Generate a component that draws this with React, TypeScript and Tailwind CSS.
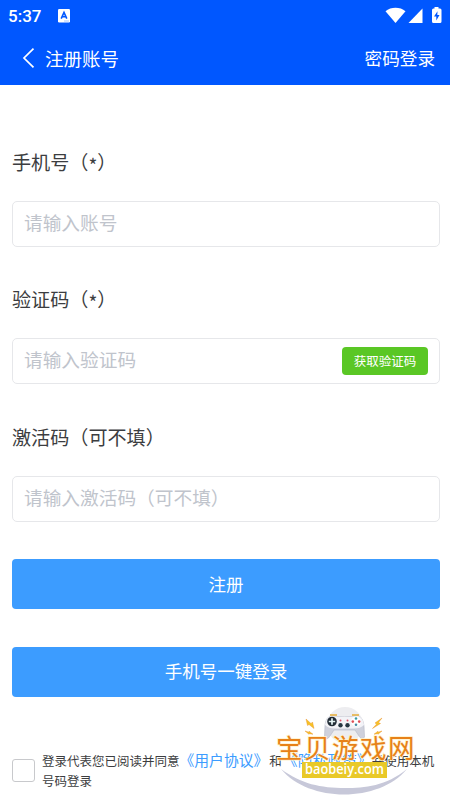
import { useState } from 'react'

interface FieldProps {
  label: string
  required?: boolean
  placeholder: string
  action?: string
}

function StatusBar() {
  return (
    <div className="flex h-8 items-center justify-between pl-2 pr-[7px]">
      <div className="flex items-center">
        <span className="w-[50px] font-[Roboto] text-[17px] font-medium leading-8">5:37</span>
        <svg width="12" height="14" viewBox="0 0 12 14">
          <rect width="12" height="13.5" rx="1.2" fill="#fff" />
          <path d="M3.2 9.7 6 3.5l2.8 6.2M4.3 7.8h3.4" fill="none" stroke="#0057ff" strokeWidth="1.6" />
          <path d="M6 12h5" stroke="#8cb4ff" strokeWidth="0.8" />
        </svg>
      </div>
      <svg className="-mt-0.5" width="58" height="18" viewBox="0 0 58 18" fill="#fff">
        <path d="M0.5 5.3C6 0.7 15 0.7 20.5 5.3L10.5 17z" />
        <path d="M37.5 2.5V17H23.5z" />
        <path d="M49.5 1h4v1.5h1.5q1.5 0 1.5 1.5v11.5q0 1.5-1.5 1.5h-6.5q-1.5 0-1.5-1.5V4q0-1.5 1.5-1.5h1z" />
        <path d="M52.5 5.2 49 10.4h2.3v4l3.2-5.5h-2.2z" fill="#0057ff" />
      </svg>
    </div>
  )
}

function Header() {
  return (
    <header className="h-[85px] bg-[#0057ff] text-white">
      <StatusBar />
      <div className="flex h-[53px] items-center justify-between pl-[22px] pr-[15px]">
        <div className="flex items-center gap-[10px]">
          <svg className="-mt-0.5" width="13" height="20" viewBox="0 0 13 20" fill="none" stroke="#fff" strokeWidth="1.7">
            <path d="M11.5 0.7 2 10l9.5 9.3" />
          </svg>
          <span className="text-[18.5px]">注册账号</span>
        </div>
        <span className="text-[17.6px]">密码登录</span>
      </div>
    </header>
  )
}

function Field({ label, required, placeholder, action }: FieldProps) {
  return (
    <div className="h-[137.4px]">
      <label className="block h-[38px] whitespace-nowrap text-[19.1px] leading-9 text-[#3c3d40]">
        {label}
        {required && (
          <>
            （<span className="inline-block translate-y-[3px]">*</span>）
          </>
        )}
      </label>
      <div className="mt-[19px] flex h-[46px] items-center rounded-[5px] border border-[#e6e7ea] pl-[11px] pr-[11px]">
        <input
          className="h-full min-w-0 flex-1 bg-transparent pb-[5px] text-[18.7px] outline-none placeholder:text-[#c0c4cc]"
          placeholder={placeholder}
        />
        {action && (
          <button className="h-7 w-[86px] rounded-[4px] bg-[#5ac725] pb-px text-[12.5px] text-white">{action}</button>
        )}
      </div>
    </div>
  )
}

function Watermark() {
  return (
    <svg
      className="pointer-events-none absolute left-[270px] top-[700px]"
      width="155"
      height="100"
      viewBox="0 0 155 100"
    >
      <path d="M11 69C39 103 109 103 137 69C116 86 95 88 75 88C51 88 31 84 11 69z" fill="#c7c8d9" />
      <circle cx="75" cy="25" r="18" fill="#ededf0" />
      {/* gamepad */}
      <path
        d="M61 16Q74 18 88 16Q93 17 94 26L94.5 37Q92 41 89 36L85 30H64L60 36Q57 41 54.5 37L55 25Q56 17 61 16z"
        fill="#cfd1dc"
        stroke="#b6b8c6"
        strokeWidth="0.6"
      />
      <path d="M61 16Q74 18 88 16Q93 17 94 25Q90 29 82 28.5H67Q59 29 55 25Q56 17 61 16z" fill="#f3f3f7" />
      <path d="M60 15h7M82 15h7" stroke="#e6ad38" strokeWidth="1.5" />
      <circle cx="62" cy="21.5" r="4.8" fill="#222c36" />
      <path d="M62 18.3v6.4M58.8 21.5h6.4" stroke="#e5f4f4" strokeWidth="1.7" />
      <circle cx="86" cy="21.5" r="5" fill="#fff" />
      <circle cx="86" cy="18.5" r="1.3" fill="#3a9ba8" />
      <circle cx="86" cy="24.8" r="1.3" fill="#458ca5" />
      <circle cx="82.8" cy="21.6" r="1.3" fill="#df4e56" />
      <circle cx="89.2" cy="21.6" r="1.3" fill="#df4e56" />
      <circle cx="70.5" cy="20.5" r="1" fill="#df5266" />
      <circle cx="77.5" cy="20.5" r="1" fill="#df5266" />
      <circle cx="70.5" cy="25.3" r="2.2" fill="#263641" />
      <circle cx="77.5" cy="25.3" r="2.2" fill="#263641" />
      {/* sparks */}
      <g fill="#f7c325" stroke="#e88b25" strokeWidth="0.4">
        <path d="m36 19 5 4.5 1.5-1.5 1.500 6.500-5-4-1.500 1z" />
        <path d="m35 31 4 1.200v-1l4 3-4-.5v.6z" />
        <path d="m112 18-7 5 1.700 1-4.200 4.500 8-5-2-1z" />
        <path d="m112 31-4 1.200v-1l-4 3 4-.5v.6z" />
      </g>
      <text
        x="6"
        y="58"
        textLength="138.5"
        fontSize="26.5"
        fill="#e78118"
        stroke="#fff3cd"
        strokeWidth="1.5"
        paintOrder="stroke"
      >
        宝贝游戏网
      </text>
      <rect x="32" y="62" width="85" height="16" fill="#e9c928" />
      <text
        x="35"
        y="74"
        textLength="79"
        lengthAdjust="spacingAndGlyphs"
        fontFamily="Open Sans, sans-serif"
        fontSize="15"
        fontWeight="600"
        fill="#fff"
      >
        baobeiy.com
      </text>
    </svg>
  )
}

export default function App() {
  const [agreed, setAgreed] = useState(false)

  return (
    <div
      lang="zh-CN"
      className="relative h-[800px] w-[450px] overflow-hidden bg-white font-['Noto_Sans_CJK_SC',sans-serif]"
    >
      <Header />
      <main className="pl-3 pr-[10px] pt-[59px]">
        <Field label="手机号" required placeholder="请输入账号" />
        <Field label="验证码" required placeholder="请输入验证码" action="获取验证码" />
        <Field label="激活码（可不填）" placeholder="请输入激活码（可不填）" />

        <div className="mt-[2.8px] flex flex-col gap-[37.6px]">
          <button className="h-[50px] rounded-[4px] bg-[#3c9cff] text-[17.5px] text-white">注册</button>
          <button className="h-[50px] rounded-[4px] bg-[#3c9cff] text-[17.5px] text-white">手机号一键登录</button>
        </div>

        <div className="mt-[53.4px] flex items-center">
          <button
            role="checkbox"
            aria-checked={agreed}
            aria-label="同意协议"
            onClick={() => setAgreed(!agreed)}
            className={`h-[23px] w-[23px] shrink-0 rounded-[3px] border border-[#c8c9cc] ${agreed ? 'bg-[#3c9cff]' : 'bg-white'}`}
          />
          <p className="ml-[7px] whitespace-nowrap text-[12.5px] leading-5 text-[#3c3d40]">
            登录代表您已阅读并同意
            <a className="text-[14.8px] text-[#3c9cff]">《用户协议》</a>
            <span className="mx-px">和</span>
            <a className="text-[14.8px] text-[#3c9cff]">《隐私政策》</a>
            并使用本机
            <br />
            号码登录
          </p>
        </div>
      </main>
      <Watermark />
    </div>
  )
}
